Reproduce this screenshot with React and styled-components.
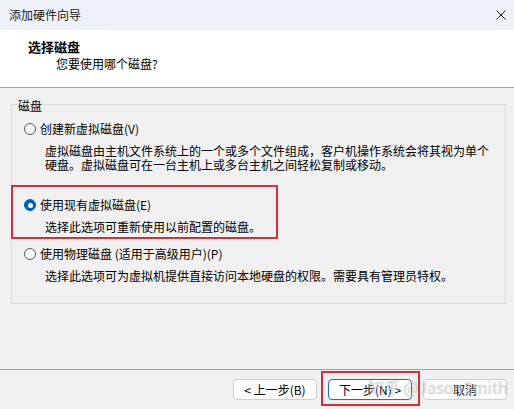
import React from "react";
import styled, { createGlobalStyle } from "styled-components";

const GlobalStyle = createGlobalStyle`
  html, body { margin: 0; padding: 0; }
  body {
    background: #f0f0f0;
    font-family: "Noto Sans CJK SC", "Microsoft YaHei", "Liberation Sans", sans-serif;
    font-size: 12px;
    color: #000;
  }
`;

const Window = styled.div`
  position: relative;
  width: 514px;
  height: 409px;
  display: flex;
  flex-direction: column;
  background: #f0f0f0;
  overflow: hidden;
`;

const TitleBar = styled.div`
  height: 30px;
  flex: none;
  display: flex;
  align-items: center;
  justify-content: space-between;
  padding: 0 8px 0 9px;
  background: #eef2f8;
  color: #1a1a1a;
  line-height: 16px;
`;

const CloseIcon = styled.svg`
  width: 10px;
  height: 10px;
  display: block;
`;

const Header = styled.div`
  height: 58px;
  flex: none;
  box-sizing: border-box;
  background: #fff;
  border-bottom: 1px solid #a6a6a6;
  padding-top: 8px;
`;

const HeaderTitle = styled.div`
  padding-left: 28px;
  font-size: 13px;
  font-weight: 700;
  line-height: 17px;
`;

const HeaderSubtitle = styled.div`
  padding-left: 56px;
  line-height: 17px;
`;

const Body = styled.div`
  flex: 1;
  padding: 7px 8px 0 11px;
`;

const Group = styled.fieldset`
  margin: 0;
  min-width: 0;
  border: 1px solid #dadada;
  padding: 0 12px 20px 12px;
`;

const Legend = styled.legend`
  padding: 4px 1px 0;
  margin-left: -7px;
  line-height: 14px;
`;

const Options = styled.div`
  display: flex;
  flex-direction: column;
  padding-top: 8px;
`;

const Option = styled.div`
  display: flex;
  flex-direction: column;
  margin-top: ${(p) => p.$gap}px;
  ${(p) =>
    p.$highlighted &&
    `
    align-self: flex-start;
    box-sizing: border-box;
    width: 267px;
    margin-left: -13px;
    border: 2px solid #d0313a;
    padding: 10px 0 3px 11px;
  `}
`;

const OptionLabel = styled.label`
  display: flex;
  align-items: center;
  gap: 4px;
  height: 16px;
  line-height: 16px;
  white-space: nowrap;
`;

const Radio = styled.span`
  box-sizing: border-box;
  width: 12px;
  height: 12px;
  border-radius: 50%;
  flex: none;
  display: flex;
  align-items: center;
  justify-content: center;
  border: 1px solid ${(p) => (p.$checked ? "#005fb8" : "#5c5c5c")};
  background: ${(p) => (p.$checked ? "#005fb8" : "#f8f8f8")};
  &::after {
    content: "";
    display: ${(p) => (p.$checked ? "block" : "none")};
    width: 5px;
    height: 5px;
    border-radius: 50%;
    background: #fff;
  }
`;

const Desc = styled.div`
  margin-top: 7px;
  padding-left: 21px;
  line-height: 14px;
  white-space: nowrap;
`;

const Footer = styled.div`
  height: 40px;
  flex: none;
  box-sizing: border-box;
  border-top: 1px solid #a3a3a3;
  display: flex;
  justify-content: flex-end;
  align-items: flex-start;
  gap: 11px;
  padding: 9px 7px 0 0;
`;

const Button = styled.button`
  box-sizing: border-box;
  width: 84px;
  height: 21px;
  padding: 0;
  border-radius: 4px;
  border: 1px solid ${(p) => (p.$primary ? "#2a6f9e" : "#cfcfcf")};
  background: #fdfdfd;
  font-family: inherit;
  font-size: 12px;
  line-height: 19px;
  color: #000;
`;

const Highlight = styled.div`
  margin: -8px -8px -6px -7px;
  border: 2px solid #d0313a;
  padding: 6px 6px 4px 5px;
  display: flex;
`;

const Watermark = styled.div`
  position: absolute;
  left: 368px;
  top: 377px;
  font-size: 16px;
  line-height: 20px;
  color: rgba(255, 255, 255, 0.6);
  text-shadow: 0 0 1px rgba(0, 0, 0, 0.35);
  pointer-events: none;
  white-space: nowrap;
`;

const options = [
  {
    label: "创建新虚拟磁盘(V)",
    desc: [
      "虚拟磁盘由主机文件系统上的一个或多个文件组成，客户机操作系统会将其视为单个",
      "硬盘。虚拟磁盘可在一台主机上或多台主机之间轻松复制或移动。",
    ],
    gap: 0,
  },
  {
    label: "使用现有虚拟磁盘(E)",
    desc: ["选择此选项可重新使用以前配置的磁盘。"],
    checked: true,
    highlighted: true,
    gap: 13,
  },
  {
    label: "使用物理磁盘 (适用于高级用户)(P)",
    desc: ["选择此选项可为虚拟机提供直接访问本地硬盘的权限。需要具有管理员特权。"],
    gap: 7,
  },
];

export default function App() {
  return (
    <>
      <GlobalStyle />
      <Window>
        <TitleBar>
          <span>添加硬件向导</span>
          <CloseIcon viewBox="0 0 10 10">
            <path d="M0.5 0.5 L9.5 9.5 M9.5 0.5 L0.5 9.5" stroke="#1a1a1a" strokeWidth="1" fill="none" />
          </CloseIcon>
        </TitleBar>
        <Header>
          <HeaderTitle>选择磁盘</HeaderTitle>
          <HeaderSubtitle>您要使用哪个磁盘?</HeaderSubtitle>
        </Header>
        <Body>
          <Group>
            <Legend>磁盘</Legend>
            <Options>
              {options.map((o) => (
                <Option key={o.label} $gap={o.gap} $highlighted={o.highlighted}>
                  <OptionLabel>
                    <Radio $checked={o.checked} />
                    {o.label}
                  </OptionLabel>
                  <Desc>
                    {o.desc.map((line, i) => (
                      <div key={i}>{line}</div>
                    ))}
                  </Desc>
                </Option>
              ))}
            </Options>
          </Group>
        </Body>
        <Footer>
          <Button>&lt; 上一步(B)</Button>
          <Highlight>
            <Button $primary>下一步(N) &gt;</Button>
          </Highlight>
          <Button>取消</Button>
        </Footer>
        <Watermark>知乎 @JasonSmith</Watermark>
      </Window>
    </>
  );
}
